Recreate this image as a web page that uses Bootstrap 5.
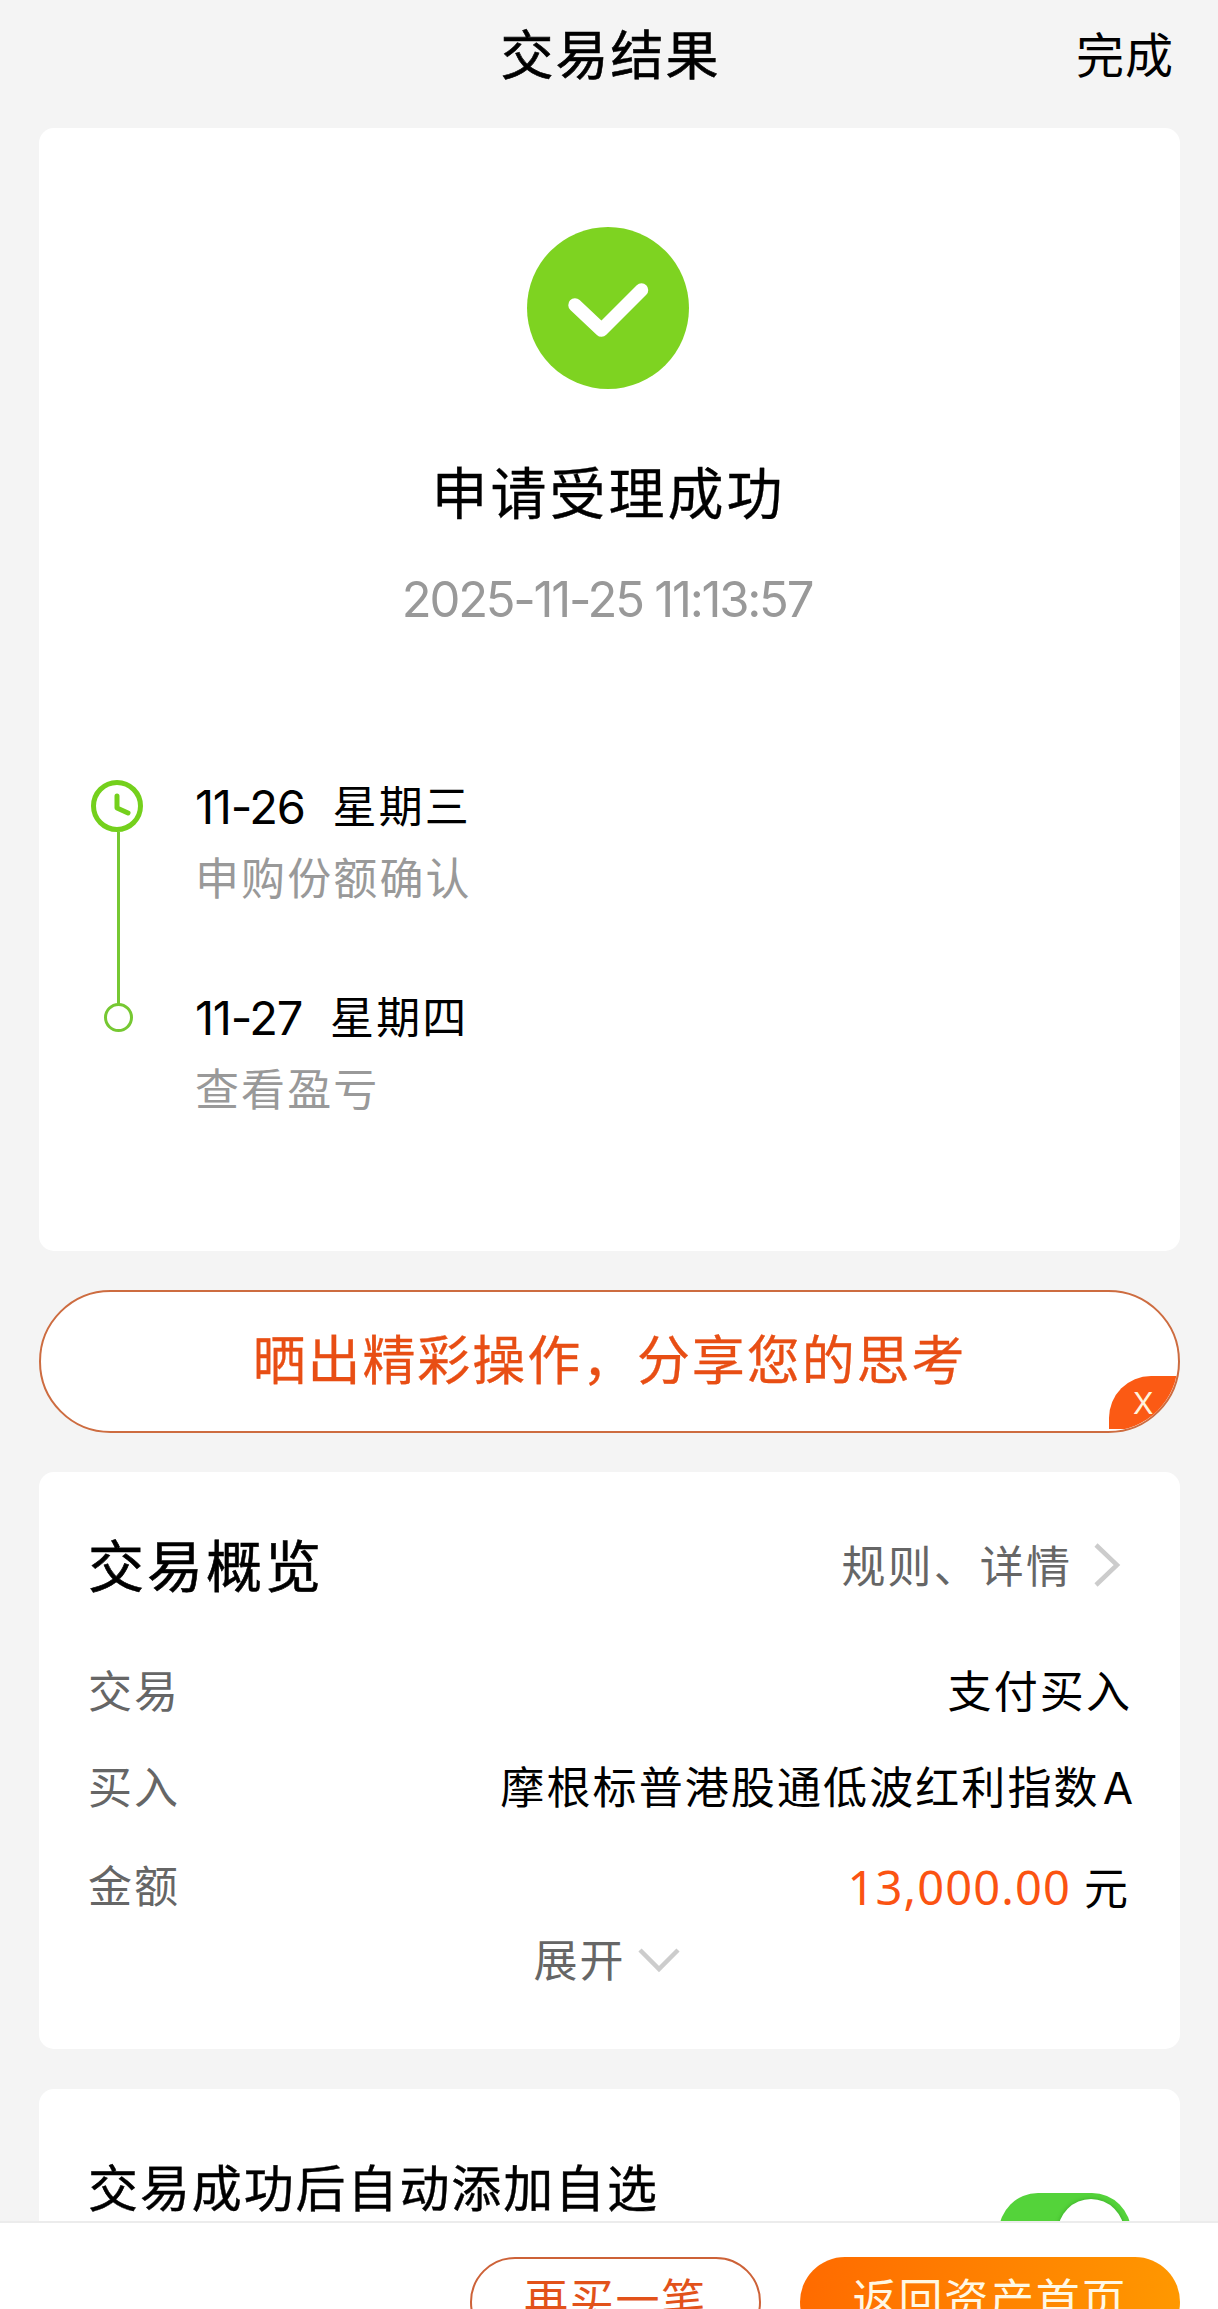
<!DOCTYPE html>
<html lang="zh-CN">
<head>
<meta charset="utf-8">
<meta name="viewport" content="width=device-width, initial-scale=1">
<title>交易结果</title>
<link href="https://cdn.jsdelivr.net/npm/bootstrap@5.3.0/dist/css/bootstrap.min.css" rel="stylesheet">
<style>
  body { background: #f4f4f4; color: #000; font-family: "Noto Sans CJK SC", sans-serif; overflow: hidden; }
  .screen { height: 2309px; overflow: hidden; }
  .topbar { height: 128px; display: grid; grid-template-columns: 1fr auto 1fr; padding: 19px 0 0 3px; line-height: 66px; }
  .topbar h1 { font-size: 53px; line-height: 66px; letter-spacing: 2px; font-weight: 400; -webkit-text-stroke: .6px #000; }
  .topbar a { font-size: 48px; letter-spacing: 1px; color: #000; padding-right: 44px; }
  .panel { background: #fff; border: 0; border-radius: 15px; margin: 0 38px 0 39px; flex: none; }
  .line { line-height: 60px; white-space: nowrap; }
  .num { font-family: Inter, sans-serif; }
  .result { height: 1123px; padding-top: 99px; }
  .result-mark { margin: 0 auto 0 488px; }
  .result-title { font-size: 56px; letter-spacing: 3px; margin: 71px 2px 48px 0; -webkit-text-stroke: .3px #000; }
  .stamp { font-size: 49px; color: #999; letter-spacing: -2.25px; padding: 2px 5px 0 0; margin-bottom: -2px; }
  .steps { margin-top: 146px; padding-left: 49px; }
  .steps-text { padding-left: 47px; font-size: 44px; letter-spacing: 2.1px; }
  .steps-text .num { font-size: 47px; letter-spacing: -1.3px; line-height: 66px; height: 60px; margin-right: 28px; }
  .muted { color: #999; margin-top: 12px; }
  .share { height: 143px; margin: 39px 38px 39px 39px; border: 2px solid #cd6c40; border-radius: 72px; background: #fff; color: #e84e14; font-size: 53px; letter-spacing: 1.9px; flex: none; }
  .share-label { padding-bottom: 7px; -webkit-text-stroke: .3px #e84e14; }
  .share-x { right: 0; bottom: 2px; width: 69px; height: 53px; background: #fb5a14; border-top-left-radius: 42px; color: #fff4dc; font-size: 30px; line-height: 55px; padding-left: 24px; letter-spacing: 0; }
  .overview { height: 577px; padding: 60px 48px 0 49px; font-size: 44px; letter-spacing: 2.1px; }
  .overview h2 { font-size: 56px; letter-spacing: 3px; font-weight: 400; -webkit-text-stroke: .6px #000; }
  .grey { color: #666; }
  .fund-class { margin-left: 3px; letter-spacing: -1px; }
  .amount { font-family: "Noto Sans", sans-serif; font-size: 47px; letter-spacing: 1.1px; color: #fb5312; line-height: 62px; }
  .watch { margin-top: 40px; height: 132px; padding: 66px 49px 0 49px; border-radius: 15px 15px 0 0; overflow: hidden; }
  .watch h2 { font-size: 50px; letter-spacing: 1.9px; font-weight: 400; -webkit-text-stroke: .4px #000; }
  .toggle { width: 132px; height: 78px; margin-top: 38px; border-radius: 39px; background: #54d33a; padding: 6px 7px; flex: none; }
  .knob { width: 66px; height: 66px; border-radius: 50%; background: #fff; box-shadow: 0 0 4px rgba(0,90,0,.35); }
  .actions { height: 88px; border-top: 2px solid #ececec; background: #fff; padding: 34px 38px 0 0; gap: 39px; flex: none; }
  .actions .btn { height: 90px; border-radius: 45px; font-size: 44px; letter-spacing: 1.8px; padding: 0; white-space: nowrap; flex: none; }
  .again { width: 291px; border: 2px solid #cd6238; color: #e2521a; line-height: 76px; }
  .home { width: 380px; border: 0; background: linear-gradient(100deg, #ff6a00, #ff9900); color: #fff8e4; line-height: 80px; }
  .again, .home { display: flex; align-items: flex-start; justify-content: center; }
  svg { display: block; flex: none; }
</style>
<script src="https://cdn.jsdelivr.net/npm/bootstrap@5.3.0/dist/js/bootstrap.bundle.min.js"></script>
</head>
<body>
<div class="screen d-flex flex-column">
  <header class="topbar">
    <span></span>
    <h1 class="m-0">交易结果</h1>
    <a href="#" class="text-decoration-none text-end">完成</a>
  </header>

  <section class="card panel result">
    <svg class="result-mark" width="162" height="162" viewBox="0 0 162 162">
      <circle cx="81" cy="81" r="81" fill="#7ed321"/>
      <path d="M48 78 74.500 103 114.500 63" fill="none" stroke="#fff" stroke-width="13.500" stroke-linecap="round" stroke-linejoin="round"/>
    </svg>
    <div class="line result-title text-center">申请受理成功</div>
    <div class="line num stamp text-center">2025-11-25 11:13:57</div>
    <div class="steps d-flex">
      <svg width="60" height="270" viewBox="88 774 60 270" fill="none">
        <path d="M118.500 832V1004" stroke="#76c832" stroke-width="3"/>
        <circle cx="117" cy="806" r="23.500" stroke="#74d01c" stroke-width="5"/>
        <path d="M117 796V808L128 813" stroke="#74d01c" stroke-width="5" stroke-linecap="round" stroke-linejoin="round"/>
        <circle cx="118.500" cy="1017.500" r="13" stroke="#76c832" stroke-width="3"/>
      </svg>
      <div class="steps-text">
        <div class="line d-flex"><span class="num">11-26</span><span>星期三</span></div>
        <div class="line muted">申购份额确认</div>
        <div class="line d-flex" style="margin-top:79px"><span class="num">11-27</span><span>星期四</span></div>
        <div class="line muted">查看盈亏</div>
      </div>
    </div>
  </section>

  <div class="share position-relative overflow-hidden d-flex align-items-center justify-content-center">
    <span class="share-label">晒出精彩操作，分享您的思考</span>
    <span class="share-x num position-absolute">X</span>
  </div>

  <section class="card panel overview">
    <div class="d-flex justify-content-between align-items-center">
      <h2 class="line m-0">交易概览</h2>
      <a href="#" class="line grey text-decoration-none d-flex align-items-center" style="padding-top:2px">规则、详情
        <svg width="28" height="44" viewBox="0 0 28 44" style="margin:2px 11px 0 21px"><path d="M3 2 24 22 3 42" fill="none" stroke="#ccc" stroke-width="4.500"/></svg>
      </a>
    </div>
    <div class="d-flex flex-column" style="margin-top:65px;gap:36px">
      <div class="line d-flex justify-content-between"><span class="grey">交易</span><span>支付买入</span></div>
      <div class="line d-flex justify-content-between"><span class="grey">买入</span><span>摩根标普港股通低波红利指数<span class="num fund-class">A</span></span></div>
      <div class="line d-flex justify-content-between"><span class="grey">金额</span><span class="d-flex" style="padding-top:2px;margin-bottom:-4px"><span class="amount">13,000.00</span><span style="margin:0 2px 0 13px">元</span></span></div>
    </div>
    <div class="line grey d-flex justify-content-center align-items-center" style="margin:14px 6px 0 0">展开
      <svg width="44" height="26" viewBox="0 0 44 26" style="margin:3px 0 0 11px"><path d="M3 3 22 22 41 3" fill="none" stroke="#ccc" stroke-width="4.500"/></svg>
    </div>
  </section>

  <section class="panel watch d-flex justify-content-between align-items-start">
    <h2 class="line m-0">交易成功后自动添加自选</h2>
    <div class="toggle d-flex justify-content-end"><div class="knob"></div></div>
  </section>

  <footer class="actions d-flex justify-content-end">
    <button class="btn again">再买一笔</button>
    <button class="btn home">返回资产首页</button>
  </footer>
</div>
</body>
</html>
